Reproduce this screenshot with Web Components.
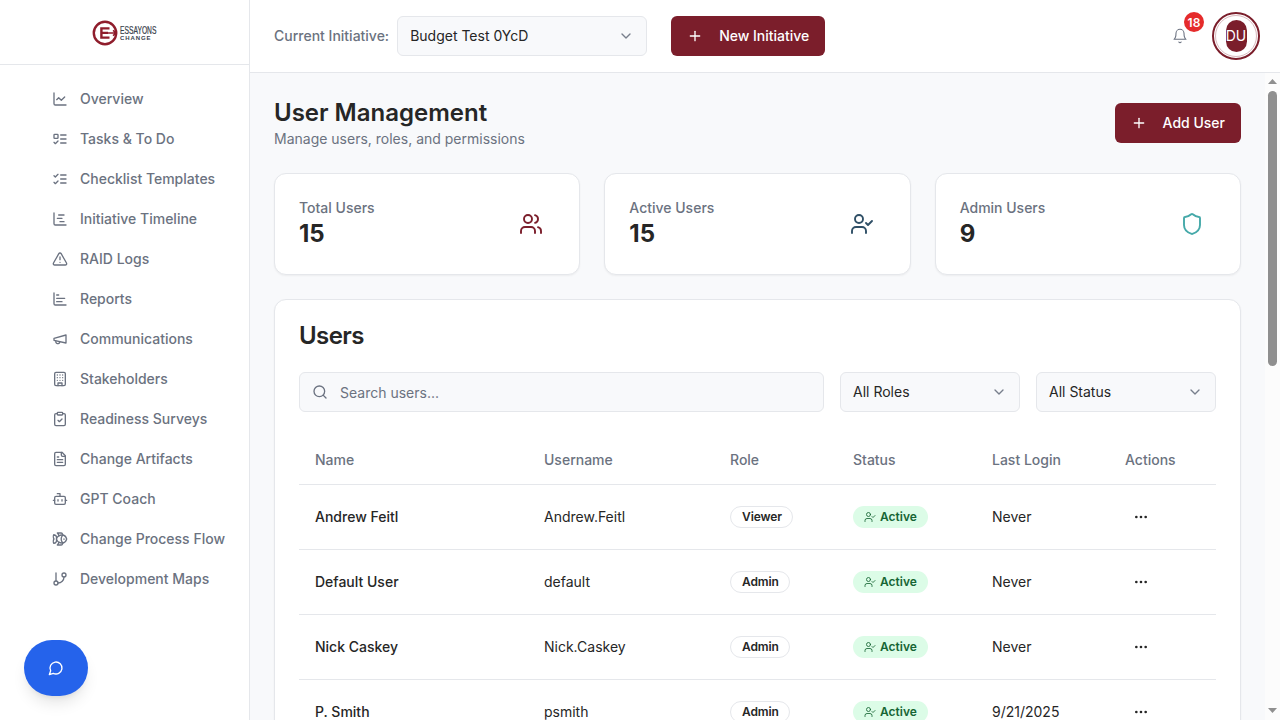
<!DOCTYPE html>
<html lang="en"><head><meta charset="utf-8"><title>User Management</title>
<style>
html,body{margin:0;height:100%;overflow:hidden}
body{font-family:Inter,"Liberation Sans",sans-serif;color:#262626;background:#f8f9fb}
</style></head><body>
<app-shell>
  <app-sidebar slot="side">
    <nav-item icon="chart-line">Overview</nav-item>
    <nav-item icon="list-todo">Tasks &amp; To Do</nav-item>
    <nav-item icon="list-checks">Checklist Templates</nav-item>
    <nav-item icon="chart-gantt">Initiative Timeline</nav-item>
    <nav-item icon="triangle-alert">RAID Logs</nav-item>
    <nav-item icon="chart-bar">Reports</nav-item>
    <nav-item icon="megaphone">Communications</nav-item>
    <nav-item icon="building">Stakeholders</nav-item>
    <nav-item icon="clipboard-check">Readiness Surveys</nav-item>
    <nav-item icon="file-text">Change Artifacts</nav-item>
    <nav-item icon="bot">GPT Coach</nav-item>
    <nav-item icon="fish">Change Process Flow</nav-item>
    <nav-item icon="git-branch">Development Maps</nav-item>
  </app-sidebar>
  <app-header slot="head"></app-header>
  <page-body slot="main">
    <page-title></page-title>
    <stat-row>
      <stat-card label="Total Users" value="15" icon="users" color="#7b1e2b"></stat-card>
      <stat-card label="Active Users" value="15" icon="user-check" color="#2f4f66"></stat-card>
      <stat-card label="Admin Users" value="9" icon="shield" color="#45a9a9"></stat-card>
    </stat-row>
    <users-card>
      <user-row name="Andrew Feitl" username="Andrew.Feitl" role="Viewer" login="Never"></user-row>
      <user-row name="Default User" username="default" role="Admin" login="Never"></user-row>
      <user-row name="Nick Caskey" username="Nick.Caskey" role="Admin" login="Never"></user-row>
      <user-row name="P. Smith" username="psmith" role="Admin" login="9/21/2025"></user-row>
    </users-card>
  </page-body>
</app-shell>
<script>
const P={
'chart-line':'<path d="M3 3v16a2 2 0 0 0 2 2h16"/><path d="m19 9-5 5-4-4-3 3"/>',
'list-todo':'<rect x="3" y="5" width="6" height="6" rx="1"/><path d="m3 17 2 2 4-4"/><path d="M13 6h8"/><path d="M13 12h8"/><path d="M13 18h8"/>',
'list-checks':'<path d="m3 17 2 2 4-4"/><path d="m3 7 2 2 4-4"/><path d="M13 6h8"/><path d="M13 12h8"/><path d="M13 18h8"/>',
'chart-gantt':'<path d="M10 6h8"/><path d="M12 16h6"/><path d="M3 3v16a2 2 0 0 0 2 2h16"/><path d="M8 11h7"/>',
'triangle-alert':'<path d="m21.73 18-8-14a2 2 0 0 0-3.48 0l-8 14A2 2 0 0 0 4 21h16a2 2 0 0 0 1.73-3"/><path d="M12 9v4"/><path d="M12 17h.01"/>',
'chart-bar':'<path d="M3 3v16a2 2 0 0 0 2 2h16"/><path d="M7 16h8"/><path d="M7 11h12"/><path d="M7 6h3"/>',
'megaphone':'<path d="m3 11 18-5v12L3 14v-3z"/><path d="M11.6 16.8a3 3 0 1 1-5.8-1.6"/>',
'building':'<rect x="4" y="2" width="16" height="20" rx="2"/><path d="M9 22v-4h6v4"/><path d="M8 6h.01M16 6h.01M12 6h.01M12 10h.01M12 14h.01M16 10h.01M16 14h.01M8 10h.01M8 14h.01"/>',
'clipboard-check':'<rect x="8" y="2" width="8" height="4" rx="1"/><path d="M16 4h2a2 2 0 0 1 2 2v14a2 2 0 0 1-2 2H6a2 2 0 0 1-2-2V6a2 2 0 0 1 2-2h2"/><path d="m9 14 2 2 4-4"/>',
'file-text':'<path d="M15 2H6a2 2 0 0 0-2 2v16a2 2 0 0 0 2 2h12a2 2 0 0 0 2-2V7Z"/><path d="M14 2v4a2 2 0 0 0 2 2h4"/><path d="M10 9H8"/><path d="M16 13H8"/><path d="M16 17H8"/>',
'bot':'<path d="M12 8V4H8"/><rect x="4" y="8" width="16" height="12" rx="2"/><path d="M2 14h2"/><path d="M20 14h2"/><path d="M15 13v2"/><path d="M9 13v2"/>',
'fish':'<path d="M6.5 12c.94-3.46 4.94-6 8.5-6 3.56 0 6.06 2.54 7 6-.94 3.47-3.44 6-7 6s-7.56-2.53-8.5-6Z"/><path d="M18 12v.5"/><path d="M16 17.93a9.77 9.77 0 0 1 0-11.86"/><path d="M7 10.67C7 8 5.58 5.97 2.73 5.5c-1 1.5-1 5 .23 6.5-1.24 1.5-1.24 5-.23 6.5C5.58 18.03 7 16 7 13.33"/><path d="M10.46 7.26C10.2 5.88 9.17 4.24 8 3h5.8a2 2 0 0 1 1.98 1.67l.23 1.4"/><path d="m16.01 17.93-.23 1.4A2 2 0 0 1 13.8 21H8c1.17-1.24 2.2-2.88 2.46-4.26"/>',
'git-branch':'<path d="M6 3v12"/><circle cx="18" cy="6" r="3"/><circle cx="6" cy="18" r="3"/><path d="M18 9a9 9 0 0 1-9 9"/>',
'users':'<path d="M16 21v-2a4 4 0 0 0-4-4H6a4 4 0 0 0-4 4v2"/><circle cx="9" cy="7" r="4"/><path d="M22 21v-2a4 4 0 0 0-3-3.87"/><path d="M16 3.13a4 4 0 0 1 0 7.75"/>',
'user-check':'<path d="M16 21v-2a4 4 0 0 0-4-4H6a4 4 0 0 0-4 4v2"/><circle cx="9" cy="7" r="4"/><path d="m16 11 2 2 4-4"/>',
'shield':'<path d="M20 13c0 5-3.5 7.5-7.66 8.95a1 1 0 0 1-.67-.01C7.5 20.5 4 18 4 13V6a1 1 0 0 1 1-1c2 0 4.5-1.2 6.24-2.72a1.17 1.17 0 0 1 1.52 0C14.51 3.81 17 5 19 5a1 1 0 0 1 1 1z"/>',
'bell':'<path d="M6 8a6 6 0 0 1 12 0c0 7 3 9 3 9H3s3-2 3-9"/><path d="M10.3 21a1.94 1.94 0 0 0 3.4 0"/>',
'message-circle':'<path d="M7.9 20A9 9 0 1 0 4 16.1L2 22Z"/>',
'search':'<circle cx="11" cy="11" r="8"/><path d="m21 21-4.3-4.3"/>',
'ellipsis':'<circle cx="12" cy="12" r="1"/><circle cx="19" cy="12" r="1"/><circle cx="5" cy="12" r="1"/>',
'plus':'<path d="M5 12h14"/><path d="M12 5v14"/>',
'chevron-down':'<path d="m6 9 6 6 6-6"/>'
};
function def(name,html){
  customElements.define(name,class extends HTMLElement{
    constructor(){super();this.attachShadow({mode:'open'})}
    connectedCallback(){
      const a=n=>this.getAttribute(n)||'';
      this.shadowRoot.innerHTML=typeof html==='function'?html(a):html;
    }
  });
}
def('ui-icon',a=>`<style>:host{display:inline-flex;flex:none;width:${a('size')||16}px;height:${a('size')||16}px}svg{display:block}</style><svg xmlns="http://www.w3.org/2000/svg" width="${a('size')||16}" height="${a('size')||16}" viewBox="0 0 24 24" fill="none" stroke="currentColor" stroke-width="${a('sw')||2}" stroke-linecap="round" stroke-linejoin="round">${P[a('name')]||''}</svg>`);

def('app-shell',`<style>
:host{display:grid;grid-template-columns:250px 1fr;grid-template-rows:73px 1fr;grid-template-areas:"s h" "s m";height:100vh;width:100vw;overflow:hidden}
::slotted([slot=side]){grid-area:s}
::slotted([slot=head]){grid-area:h}
::slotted([slot=main]){grid-area:m}
</style><slot name="side"></slot><slot name="head"></slot><slot name="main"></slot>`);

def('brand-logo',`<style>:host{display:block;width:66px;height:26px;position:relative;top:1px;left:.5px}svg{display:block;overflow:visible}
text{font-family:"Liberation Sans",Arial,sans-serif}</style>
<svg width="66" height="26" viewBox="0 0 66 26" xmlns="http://www.w3.org/2000/svg">
<circle cx="13" cy="13" r="11.2" fill="none" stroke="#8f1d2c" stroke-width="2.4"/>
<path d="M8.2 7.2h9.3v2.3h-6.9v2.3h5.4v2.3h-5.4v2.4h6.9v2.3H8.2z" fill="#8f1d2c"/>
<path d="M14 13h10M21 10.4l3.2 2.6-3.2 2.6" fill="none" stroke="#8f1d2c" stroke-width="1.5"/>
<text transform="translate(28 14) scale(.61 1)" font-size="11" fill="#39434d" stroke="#39434d" stroke-width=".25">ESSAYONS</text>
<text transform="translate(28 20)" font-size="6" font-weight="700" letter-spacing=".9" fill="#39434d">CHANGE</text>
</svg>`);

def('app-sidebar',`<style>
:host{display:flex;flex-direction:column;position:relative;background:#fff;border-right:1px solid #e5e7eb;box-sizing:border-box;height:100%;overflow:hidden}
.logo{height:64px;border-bottom:1px solid #e5e7eb;display:flex;align-items:center;justify-content:center;flex:none;box-sizing:content-box}
nav{display:flex;flex-direction:column;padding-top:14px}
.fab{position:absolute;left:24px;top:640px;width:64px;height:56px;border-radius:28px;background:#2563eb;color:#fff;display:flex;align-items:center;justify-content:center;box-shadow:0 10px 15px -3px rgba(0,0,0,.1),0 4px 6px -4px rgba(0,0,0,.1)}
</style><div class="logo"><brand-logo></brand-logo></div><nav><slot></slot></nav><div class="fab"><ui-icon name="message-circle" size="16"></ui-icon></div>`);

def('nav-item',a=>`<style>
:host{display:flex;align-items:center;height:40px;padding-left:52px;gap:12px;font-size:14px;font-weight:500;color:#6b7280;line-height:20px}
</style><ui-icon name="${a('icon')}" size="16"></ui-icon><span><slot></slot></span>`);

def('select-box',a=>`<style>
:host{display:flex;align-items:center;justify-content:space-between;box-sizing:border-box;width:${a('w')}px;height:40px;padding:0 12px;background:#f8f9fb;border:1px solid #e5e7eb;border-radius:6px;font-size:14px;line-height:20px;color:#262626;flex:none}
ui-icon{color:#6b7280;opacity:.9}
</style><span>${a('text')}</span><ui-icon name="chevron-down" size="16"></ui-icon>`);

def('primary-button',a=>`<style>
:host{display:inline-flex;align-items:center;box-sizing:border-box;height:40px;padding:0 16px;gap:16px;background:#7b1e2b;color:#fff;border-radius:6px;font-size:14px;line-height:20px;font-weight:500;flex:none}
</style><ui-icon name="plus" size="16"></ui-icon><span>${a('text')}</span>`);

def('app-header',`<style>
:host{display:flex;align-items:center;box-sizing:border-box;height:73px;background:#fff;border-bottom:1px solid #e5e7eb;padding:0 20px 0 24px}
.lab{font-size:14px;line-height:20px;font-weight:500;color:#6b7280;margin-right:8px}
primary-button{margin-left:24px}
.end{margin-left:auto;display:flex;align-items:center;gap:24px}
.bell{position:relative;display:flex;color:#6b7280}
.badge{position:absolute;left:12px;top:-16px;width:20px;height:20px;border-radius:50%;background:#e52b2b;color:#fff;font-size:12px;font-weight:600;display:flex;align-items:center;justify-content:center}
.av{width:48px;height:48px;box-sizing:border-box;border-radius:50%;border:2px solid #7b1e2b;display:flex;align-items:center;justify-content:center;position:relative;background:#fff}
.av::before{content:"";position:absolute;inset:1px;border-radius:50%;border:1px solid #d9b9be}
.in{width:21px;height:32px;border-radius:11px;background:#7b1e2b;color:#fff;font-size:14px;line-height:20px;display:flex;align-items:center;justify-content:center;position:relative;white-space:nowrap}
</style>
<span class="lab">Current Initiative:</span>
<select-box w="250" text="Budget Test 0YcD"></select-box>
<primary-button text="New Initiative"></primary-button>
<div class="end"><div class="bell"><ui-icon name="bell" size="16" sw="1.6"></ui-icon><span class="badge">18</span></div><div class="av"><div class="in">DU</div></div></div>`);

def('page-body',`<style>
:host{display:flex;min-height:0;height:100%;overflow:hidden;background:#f8f9fb}
.wrap{flex:1;min-width:0;display:flex;flex-direction:column;gap:24px;padding:24px;box-sizing:border-box;overflow:hidden}
.rail{flex:none;width:15px;background:#fcfcfc;display:flex;flex-direction:column;align-items:center;padding:6px 0 7px;box-sizing:border-box}
.thumb{width:9px;height:275px;border-radius:5px;background:#8f8f8f;margin-top:7px}
.up,.down{width:9px;height:5px;background:#8f8f8f;flex:none}
.up{clip-path:polygon(50% 0,100% 100%,0 100%)}
.down{clip-path:polygon(0 0,100% 0,50% 100%);margin-top:auto}
</style><div class="wrap"><slot></slot></div><div class="rail"><div class="up"></div><div class="thumb"></div><div class="down"></div></div>`);

def('page-title',`<style>
:host{display:flex;justify-content:space-between;align-items:center;flex:none}
h1{margin:0;font-size:24px;font-weight:600;line-height:32px;color:#262626}
p{margin:0;font-size:14px;line-height:20px;color:#6b7280}
</style><div><h1>User Management</h1><p>Manage users, roles, and permissions</p></div><primary-button text="Add User"></primary-button>`);

def('stat-row',`<style>:host{display:grid;grid-template-columns:repeat(3,1fr);gap:24px;flex:none}</style><slot></slot>`);

def('stat-card',a=>`<style>
:host{display:flex;justify-content:space-between;align-items:center;box-sizing:border-box;height:102px;padding:0 36px 0 24px;background:#fff;border:1px solid #e5e7eb;border-radius:12px;box-shadow:0 1px 2px rgba(0,0,0,.05)}
.l{font-size:14px;font-weight:500;line-height:20px;color:#6b7280}
.v{font-size:24px;font-weight:700;line-height:32px;color:#262626}
ui-icon{color:${a('color')}}
</style><div><div class="l">${a('label')}</div><div class="v">${a('value')}</div></div><ui-icon name="${a('icon')}" size="24" sw="1.9"></ui-icon>`);

const COLS='grid-template-columns:229px 186px 123px 139px 133px 1fr';
def('users-card',`<style>
:host{display:block;flex:none;box-sizing:border-box;background:#fff;border:1px solid #e5e7eb;border-radius:12px;box-shadow:0 1px 2px rgba(0,0,0,.05);padding:24px}
h2{margin:0;font-size:24px;font-weight:600;line-height:24px;letter-spacing:-.6px;color:#262626}
.filters{display:flex;gap:16px;margin-top:24px}
.search{flex:1;height:40px;box-sizing:border-box;display:flex;align-items:center;gap:12px;padding:0 12px;background:#f8f9fb;border:1px solid #e5e7eb;border-radius:6px;font-size:14px;line-height:20px;color:#6b7280}
.search span{padding-top:1px}
.head{display:grid;${COLS};height:73px;box-sizing:border-box;padding-top:24px;align-items:center;border-bottom:1px solid #e5e7eb;font-size:14px;line-height:20px;font-weight:500;color:#6b7280}
.head span{padding-left:16px}
</style>
<h2>Users</h2>
<div class="filters"><div class="search"><ui-icon name="search" size="16"></ui-icon><span>Search users...</span></div>
<select-box w="180" text="All Roles"></select-box><select-box w="180" text="All Status"></select-box></div>
<div class="head"><span>Name</span><span>Username</span><span>Role</span><span>Status</span><span>Last Login</span><span>Actions</span></div>
<slot></slot>`);

def('user-row',a=>`<style>
:host{display:grid;${COLS};height:65px;box-sizing:border-box;align-items:center;border-bottom:1px solid #e5e7eb;font-size:14px;line-height:20px;color:#262626}
.c{padding-left:16px;display:flex;align-items:center}
.n{font-weight:500}
.role{display:inline-flex;align-items:center;height:22px;box-sizing:border-box;padding:0 10px 0 11px;border:1px solid #e5e7eb;border-radius:11px;font-size:12px;line-height:16px;font-weight:600;background:#fff;letter-spacing:-.1px}
.st{display:inline-flex;align-items:center;gap:4px;height:22px;padding:0 11px;border-radius:11px;background:#dcfce7;color:#166534;font-size:12px;line-height:16px;font-weight:600}
.act{padding-left:24px}
</style>
<div class="c n">${a('name')}</div><div class="c">${a('username')}</div><div class="c"><span class="role">${a('role')}</span></div>
<div class="c"><span class="st"><ui-icon name="user-check" size="12" sw="1.7"></ui-icon>Active</span></div><div class="c">${a('login')}</div><div class="c act"><ui-icon name="ellipsis" size="16"></ui-icon></div>`);
</script>
</body></html>
